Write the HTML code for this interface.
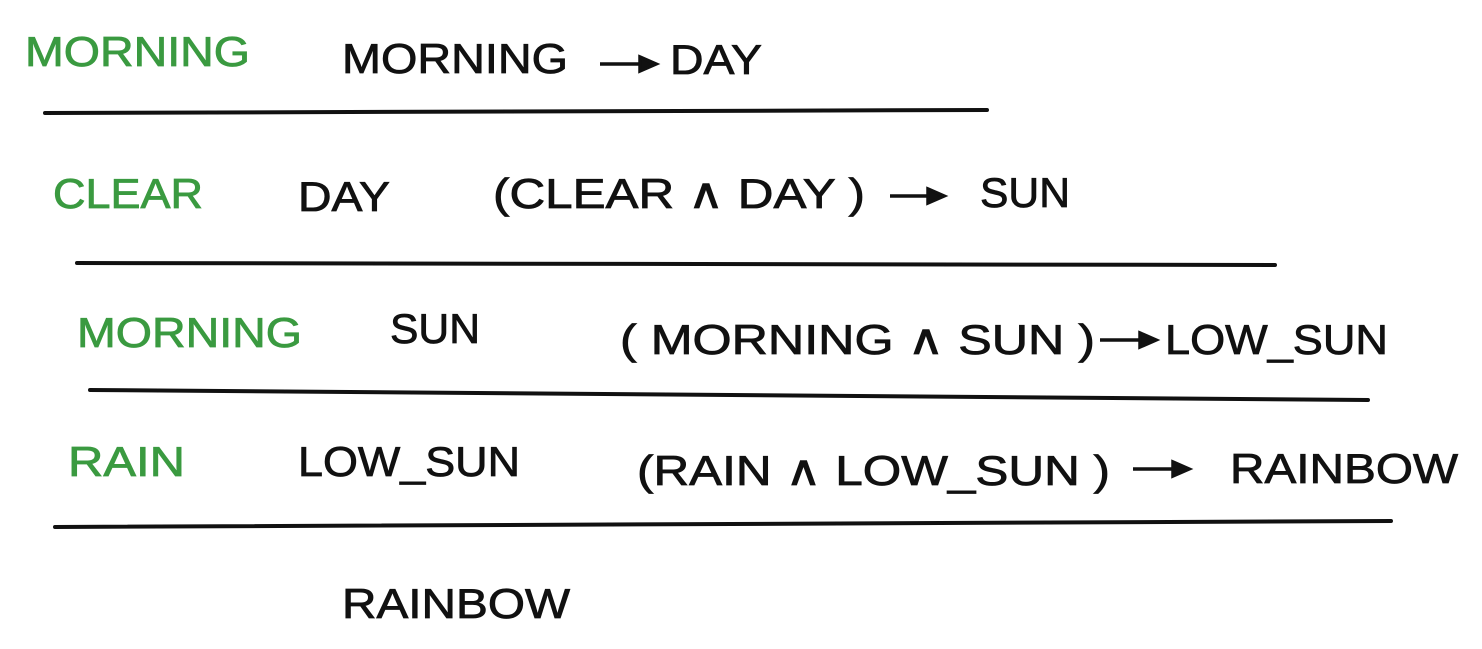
<!DOCTYPE html>
<html><head><meta charset="utf-8"><style>
html,body{margin:0;padding:0;background:#fff;width:1482px;height:649px;overflow:hidden}
svg text{font-family:"Liberation Sans",sans-serif;font-size:42px;fill:#111;stroke:#111;stroke-width:0.8}
svg text.g{fill:#3a9a40;stroke:#3a9a40}
</style></head><body>
<svg width="1482" height="649" viewBox="0 0 1482 649" xmlns="http://www.w3.org/2000/svg">
<g stroke="#111" stroke-width="4" stroke-linecap="round" fill="none">
<line x1="45" y1="113" x2="987" y2="110"/>
<line x1="77" y1="263" x2="1275" y2="265"/>
<line x1="90" y1="390" x2="1368" y2="400"/>
<line x1="55" y1="527" x2="1391" y2="521"/>
</g>
<g stroke="#111" stroke-width="3.5">
<line x1="600" y1="64" x2="642" y2="64"/><path d="M640,57 L656,64 L640,71 Z" fill="#111"/>
<line x1="890" y1="196" x2="930" y2="196"/><path d="M928,189 L944,196 L928,203 Z" fill="#111"/>
<line x1="1100" y1="340" x2="1142" y2="340"/><path d="M1140,333 L1156,340 L1140,347 Z" fill="#111"/>
<line x1="1133" y1="469" x2="1175" y2="469"/><path d="M1173,462 L1189,469 L1173,476 Z" fill="#111"/>
</g>
<text class="g" x="25" y="66" textLength="225" lengthAdjust="spacingAndGlyphs">MORNING</text>
<text x="342" y="73" textLength="226" lengthAdjust="spacingAndGlyphs">MORNING</text>
<text x="670" y="74" textLength="92" lengthAdjust="spacingAndGlyphs">DAY</text>
<text class="g" x="53" y="208" textLength="150" lengthAdjust="spacingAndGlyphs">CLEAR</text>
<text x="298" y="211" textLength="92" lengthAdjust="spacingAndGlyphs">DAY</text>
<text x="493" y="208" textLength="372" lengthAdjust="spacingAndGlyphs">(CLEAR ∧ DAY )</text>
<text x="980" y="207" textLength="90" lengthAdjust="spacingAndGlyphs">SUN</text>
<text class="g" x="77" y="347" textLength="225" lengthAdjust="spacingAndGlyphs">MORNING</text>
<text x="390" y="343" textLength="90" lengthAdjust="spacingAndGlyphs">SUN</text>
<text x="620" y="354" textLength="475" lengthAdjust="spacingAndGlyphs">( MORNING ∧ SUN )</text>
<text x="1165" y="354" textLength="223" lengthAdjust="spacingAndGlyphs">LOW_SUN</text>
<text class="g" x="68" y="476" textLength="117" lengthAdjust="spacingAndGlyphs">RAIN</text>
<text x="298" y="476" textLength="222" lengthAdjust="spacingAndGlyphs">LOW_SUN</text>
<text x="637" y="485" textLength="473" lengthAdjust="spacingAndGlyphs">(RAIN ∧ LOW_SUN )</text>
<text x="1230" y="483" textLength="228" lengthAdjust="spacingAndGlyphs">RAINBOW</text>
<text x="342" y="618" textLength="228" lengthAdjust="spacingAndGlyphs">RAINBOW</text>
</svg>
</body></html>
